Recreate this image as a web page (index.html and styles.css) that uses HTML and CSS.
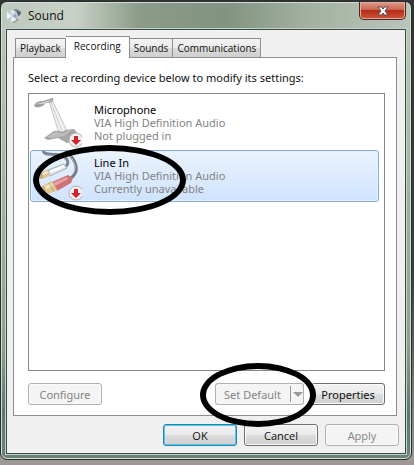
FILE: index.html
```
<!DOCTYPE html>
<html lang="en">
<head>
    <meta charset="UTF-8">
    <meta name="viewport" content="width=device-width, initial-scale=1.0">
    <title>Sound</title>
    <link rel="stylesheet" href="styles.css">
</head>
<body>
    <div class="window">
        <header class="titlebar">
            <svg class="app-icon" viewBox="0 0 16 16" aria-hidden="true">
                <path d="M6 2L11 1L15 4L14 9L11 13L7 15Z" fill="#77808a"/>
                <path d="M11 3L15 5L12 8Z" fill="#4e565f"/>
                <ellipse cx="6" cy="8" rx="6" ry="6" fill="#c3ccd6"/>
                <path d="M1 4L6 8L1 11Z" fill="#f0f4f8"/>
                <path d="M6 8L10 12L5 14Z" fill="#eef3f8"/>
                <path d="M6 8L5 2L9 3Z" fill="#e2e8ee"/>
                <path d="M6 8L10 6L11 10Z" fill="#9aa6b4"/>
                <path d="M11 10L15 6L13 11Z" fill="#dde3e8"/>
            </svg>
            <h1>Sound</h1>
            <button class="close" aria-label="Close">
                <svg viewBox="0 0 12 10" aria-hidden="true">
                    <path d="M1 1H4.500L6 3L7.500 1H11L8 5L11 9H7.500L6 7L4.500 9H1L4 5Z" fill="#fff" stroke="#5b4a50" stroke-width="1"/>
                </svg>
            </button>
        </header>

        <main class="content">
            <div class="tabs" role="tablist">
                <button class="tab" role="tab">Playback</button>
                <button class="tab active" role="tab" aria-selected="true">Recording</button>
                <button class="tab" role="tab">Sounds</button>
                <button class="tab" role="tab">Communications</button>
            </div>

            <section class="panel">
                <p class="hint">Select a recording device below to modify its settings:</p>
                <ul class="devices">
                    <li class="device">
                        <svg class="device-icon" viewBox="0 0 48 50" aria-hidden="true">
                            <path d="M10 40L20 33L40 31L44 36L39 43L33 45L24 40L14 42Z" fill="#a6a6a6"/>
                            <path d="M13 39L21 34L38 32L30 38L17 40Z" fill="#bdbdbd"/>
                            <path d="M15 3L18 2L32 31C31 34 26 35 24 32Z" fill="#f1f1f1" stroke="#c4c4c4"/>
                            <path d="M17 4L28 33" fill="none" stroke="#cfcfcf"/>
                            <path d="M24 33C26 36 31 35 33 32" fill="none" stroke="#989898"/>
                            <path d="M0 8C1 4 5 3 9 3L18 0L20 1L18 4L12 5C9 9 3 11 0 8Z" fill="#a2a2a2"/>
                            <path d="M2 6L10 4L19 1L10 6Z" fill="#d0d0d0"/>
                            <circle cx="42" cy="42" r="7" fill="#f3f0f0" stroke="#b5b1b1"/>
                            <path d="M40 38H44V42H47L42 47L37 42H40Z" fill="#d3222a"/>
                        </svg>
                        <div class="device-text">
                            <h2>Microphone</h2>
                            <p>VIA High Definition Audio</p>
                            <p>Not plugged in</p>
                        </div>
                    </li>
                    <li class="device selected">
                        <svg class="device-icon" viewBox="0 0 48 50" aria-hidden="true">
                            <path d="M9 0C11 5 18 2 26 4C35 7 36 13 30 17" fill="none" stroke="#7b858f" stroke-width="3"/>
                            <path d="M31 0C43 9 46 20 37 27" fill="none" stroke="#727b85" stroke-width="3"/>
                            <path d="M32 1C42 10 44 19 37 25" fill="none" stroke="#aeb7c0"/>
                            <path d="M14 19L30 13L33 17L16 25Z" fill="#dde5ee" stroke="#a2adba"/>
                            <path d="M16 21L30 15" stroke="#fff" stroke-width="2"/>
                            <path d="M6 22L14 18L16 25L8 28Z" fill="#dac69b"/>
                            <path d="M7 23L13 20L14 22L8 25Z" fill="#f4e9cf"/>
                            <ellipse cx="7" cy="25" rx="2" ry="3" fill="#c5ac7a"/>
                            <path d="M18 31L34 24L39 27L37 32L23 40Z" fill="#cd7373"/>
                            <path d="M19 32L33 26L34 28L21 35Z" fill="#e7a3a3"/>
                            <path d="M8 35L18 30L23 39L12 44Z" fill="#dfc795"/>
                            <path d="M10 36L17 32L19 35L11 39Z" fill="#f4e8c8"/>
                            <path d="M15 32L20 41" stroke="#b99d6b"/>
                            <ellipse cx="9" cy="40" rx="3" ry="5" fill="#ceb27c"/>
                            <circle cx="42" cy="42" r="7" fill="#f3f0f0" stroke="#b5b1b1"/>
                            <path d="M40 38H44V42H47L42 47L37 42H40Z" fill="#d3222a"/>
                        </svg>
                        <div class="device-text">
                            <h2>Line In</h2>
                            <p>VIA High Definition Audio</p>
                            <p>Currently unavailable</p>
                        </div>
                        <span class="ring ring-device"></span>
                    </li>
                </ul>
                <div class="panel-actions">
                    <button class="btn" disabled>Configure</button>
                    <div class="split">
                        <button class="btn split-main" disabled>Set Default</button>
                        <button class="btn split-arrow" disabled aria-label="More defaults"><span class="arrow"></span></button>
                        <span class="ring ring-default"></span>
                    </div>
                    <button class="btn">Properties</button>
                </div>
            </section>

            <footer class="dialog-actions">
                <button class="btn primary">OK</button>
                <button class="btn">Cancel</button>
                <button class="btn" disabled>Apply</button>
            </footer>
        </main>
    </div>
</body>
</html>
```
FILE: styles.css
```
* {
    box-sizing: border-box;
}
body {
    font-family: "Noto Sans", "Open Sans", sans-serif;
    font-size: 11px;
    line-height: 13px;
    color: #111;
    margin: 0;
    padding: 1px 2px 5px 0;
    min-height: 100vh;
    display: flex;
    background: linear-gradient(#333 0, #3c443e 60%, #9d9797 99%);
}
h1, h2, p, ul {
    margin: 0;
    padding: 0;
    font-size: inherit;
    font-weight: normal;
}
button {
    font: inherit;
    color: inherit;
    padding: 0;
    margin: 0;
}
.window {
    flex: 1;
    display: flex;
    flex-direction: column;
    padding: 0 5px 5px;
    border: 1px solid #26302c;
    border-radius: 7px;
    box-shadow: inset 0 0 0 1px #d3dfd7;
    background:
        linear-gradient(90deg, #bdc9bd 0, #c8d1c6 18%, #8b9b87 34%, #82937f 55%, #a3b1a2 75%, #b9c5b9 100%) top / 100% 28px no-repeat,
        linear-gradient(#bac7ba 0, #a9b8a8 30%, #8ea08c 75%, #5f7771 90%, #6c8279 100%);
}

/* title bar */
.titlebar {
    display: flex;
    align-items: center;
    height: 27px;
}
.app-icon {
    width: 16px;
    height: 16px;
}
.titlebar h1 {
    flex: 1;
    margin-left: 6px;
    font-family: "Open Sans", sans-serif;
    font-size: 12px;
}
.close {
    align-self: flex-start;
    display: flex;
    align-items: center;
    justify-content: center;
    width: 47px;
    height: 18px;
    border: 1px solid #4c2520;
    border-top: 0;
    border-radius: 0 0 5px 5px;
    box-shadow: inset 0 0 0 1px #e5aa9c;
    background: linear-gradient(#dc9c8c 0, #cb6652 45%, #b52d18 50%, #cf5638 100%);
}
.close svg {
    width: 12px;
    height: 10px;
}

/* dialog body */
.content {
    flex: 1;
    display: flex;
    flex-direction: column;
    padding: 6px 6px 7px;
    border: 1px solid #3c4a44;
    background: #f0f0f0;
    box-shadow: 0 0 0 1px #c5d2c9;
}
.tabs {
    display: flex;
    align-items: flex-end;
    padding-left: 2px;
    height: 21px;
    font-family: "Open Sans", sans-serif;
    font-size: 10px;
}
.tab {
    height: 19px;
    padding: 0 4px;
    border: 1px solid #8c8e94;
    border-bottom: 0;
    border-left-width: 0;
    background: linear-gradient(#f3f3f3 0, #ebebeb 50%, #dcdcdc 51%, #cfcfcf 100%);
}
.tab:first-child {
    border-left-width: 1px;
}
.tab.active {
    position: relative;
    height: 22px;
    margin-bottom: -1px;
    padding: 0 8px 3px;
    background: #fff;
}
.panel {
    flex: 1;
    display: flex;
    flex-direction: column;
    margin-right: 2px;
    padding: 13px 11px 10px 14px;
    border: 1px solid #8c8e94;
    background: #fff;
}
.hint {
    margin-bottom: 9px;
}
.devices {
    flex: 1;
    display: flex;
    flex-direction: column;
    gap: 1px;
    list-style: none;
    padding: 3px 5px 3px 1px;
    border: 1px solid #828790;
}
.device {
    position: relative;
    display: flex;
    gap: 12px;
    height: 52px;
    padding: 0 3px;
    border: 1px solid transparent;
    border-radius: 3px;
}
.device.selected {
    border-color: #84acdd;
    background: linear-gradient(#ebf3fd, #cfe3fe);
    box-shadow: inset 0 0 0 1px #e6f1fd;
}
.device-icon {
    width: 48px;
    height: 50px;
}
.device-text {
    padding-top: 5px;
    color: #838383;
}
.device-text h2 {
    color: #000;
}

/* buttons */
.btn {
    width: 74px;
    height: 22px;
    border: 1px solid #707070;
    border-radius: 3px;
    box-shadow: inset 0 0 0 1px #fafafa;
    background: linear-gradient(#f2f2f2 0, #ebebeb 50%, #dddddd 51%, #cfcfcf 100%);
}
.btn:disabled {
    color: #838383;
    border-color: #adb2b5;
    background: #f4f4f4;
}
.btn.primary {
    border-color: #2d7fa9;
    box-shadow: inset 0 0 0 1px #48cdf3;
}
.panel-actions {
    display: flex;
    margin-top: 12px;
}
.split {
    position: relative;
    display: flex;
    margin-left: auto;
    margin-right: 7px;
}
.split-main {
    border-right: 0;
    border-radius: 3px 0 0 3px;
    box-shadow: none;
}
.split-arrow {
    display: flex;
    align-items: center;
    justify-content: center;
    width: 15px;
    border-left: 0;
    border-radius: 0 3px 3px 0;
    box-shadow: none;
}
.split-arrow::before {
    content: "";
    width: 1px;
    height: 16px;
    margin-right: 2px;
    background: #999;
}
.arrow {
    border: 5px solid transparent;
    border-top-color: #999;
    border-bottom: 0;
}
.dialog-actions {
    display: flex;
    justify-content: flex-end;
    gap: 7px;
    margin-top: 8px;
    font-family: "Open Sans", sans-serif;
}

/* hand-drawn rings over the dialog */
.ring {
    position: absolute;
    z-index: 1;
    border: 6px solid #000;
    border-radius: 50%;
    pointer-events: none;
}
.ring-device {
    left: 2px;
    top: -6px;
    width: 153px;
    height: 70px;
}
.ring-default {
    left: -15px;
    top: -20px;
    width: 116px;
    height: 64px;
}
```
